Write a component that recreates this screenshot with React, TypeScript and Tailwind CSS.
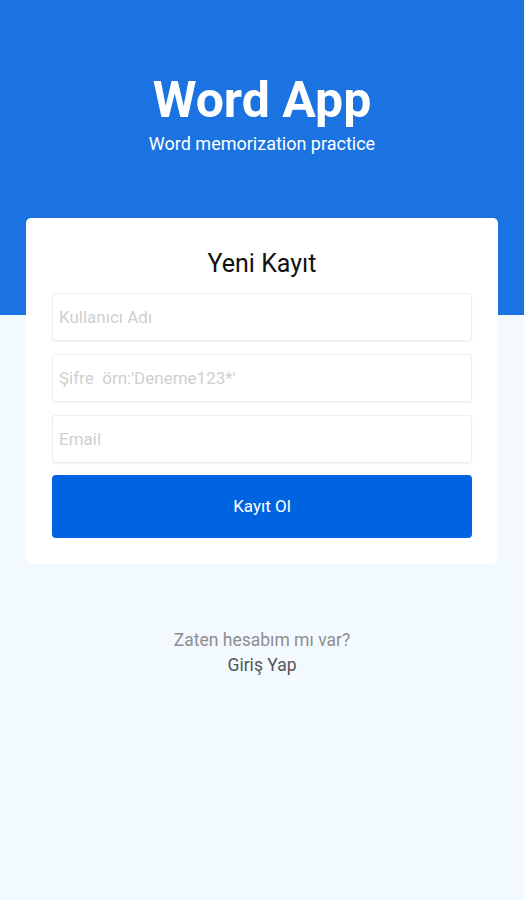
export default function App() {
  return (
    <main className="min-h-[900px] bg-[#f3faff] font-['Roboto',sans-serif]">
      <div className="bg-[#1a73e0] h-[315px] flex flex-col items-center pt-[70px]">
        <h1 className="text-white text-[50px] font-bold leading-[60px]">Word App</h1>
        <p className="text-white text-[18px] leading-[22px] mt-[3px]">Word memorization practice</p>
      </div>

      <div className="-mt-[97px] mx-[26px] bg-white rounded-[5px] px-[26px] pt-[28px] pb-[26px]">
        <h2 className="text-center text-[25px] leading-[36px] text-[#111]">Yeni Kayıt</h2>
        <form className="mt-[11px] flex flex-col gap-[13px]">
          <input
            type="text"
            placeholder="Kullanıcı Adı"
            className="h-[48px] px-[6px] rounded-[3px] border border-[#eeeeee] shadow-[0_1px_2px_rgba(0,0,0,0.06)] text-[17px] placeholder:text-[#cfcfcf] outline-none"
          />
          <input
            type="password"
            placeholder="Şifre  örn:'Deneme123*'"
            className="h-[48px] px-[6px] rounded-[3px] border border-[#eeeeee] shadow-[0_1px_2px_rgba(0,0,0,0.06)] text-[17px] placeholder:text-[#cfcfcf] outline-none"
          />
          <input
            type="email"
            placeholder="Email"
            className="h-[48px] px-[6px] rounded-[3px] border border-[#eeeeee] shadow-[0_1px_2px_rgba(0,0,0,0.06)] text-[17px] placeholder:text-[#cfcfcf] outline-none"
          />
          <button
            type="button"
            className="-mt-[1px] h-[63px] rounded-[4px] bg-[#0064e1] text-white text-[17px]"
          >
            Kayıt Ol
          </button>
        </form>
      </div>

      <div className="mt-[64px] flex flex-col items-center text-[17.5px] leading-[25px]">
        <p className="text-[#8e8e8e]">Zaten hesabım mı var?</p>
        <p className="text-[#555]">Giriş Yap</p>
      </div>
    </main>
  );
}
